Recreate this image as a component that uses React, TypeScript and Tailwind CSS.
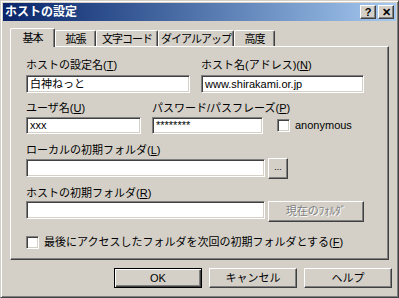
const font = "font-['Liberation_Sans','Noto_Sans_CJK_JP',sans-serif]";

const sunken =
  "bg-white border border-t-[#808080] border-l-[#808080] border-r-white border-b-white shadow-[inset_1px_1px_0_#404040,inset_-1px_-1px_0_#d4d0c8]";
const raised =
  "bg-[#d4d0c8] border border-t-white border-l-white border-r-[#404040] border-b-[#404040] shadow-[inset_-1px_-1px_0_#808080]";

const Label = ({ text, mn }: { text: string; mn: string }) => (
  <div className="h-[14px] leading-[14px] text-[11px] text-black whitespace-nowrap">
    {text}(<span className="underline underline-offset-1">{mn}</span>)
  </div>
);

const Input = ({ value, h = 18 }: { value?: string; h?: number }) => (
  <div
    className={`${sunken} w-full ${h === 18 ? "h-[18px]" : "h-[17px]"} flex items-center pl-[3px] text-[11px] leading-none text-black whitespace-nowrap overflow-hidden`}
  >
    {value}
  </div>
);

const CheckBox = () => (
  <div className={`${sunken} w-[13px] h-[13px] shrink-0`} />
);

const Tab = ({ label, active, w }: { label: string; active?: boolean; w: string }) => (
  <div
    className={`${w} ${
      active ? "h-[19px] -mb-px z-10 bg-[#d4d0c8] pt-[2px]" : "h-[16px] pt-[1px]"
    } relative shrink-0 flex justify-center border-t border-l border-r border-t-white border-l-white border-r-[#404040] shadow-[inset_-1px_0_0_#808080] rounded-t-[2px] text-[11px] leading-[14px] tracking-[-1px] text-black whitespace-nowrap`}
  >
    {label}
  </div>
);

const DlgButton = ({ label, def }: { label: string; def?: boolean }) => (
  <div
    className={`w-[88px] h-[20px] flex items-center justify-center text-[11px] text-black ${
      def
        ? "border border-black shadow-[inset_1px_1px_0_#fff,inset_-1px_-1px_0_#404040,inset_-2px_-2px_0_#808080]"
        : raised
    }`}
  >
    {label}
  </div>
);

export default function App() {
  return (
    <div
      className={`${font} w-[399px] h-[298px] bg-[#d4d0c8] border border-t-[#d4d0c8] border-l-[#d4d0c8] border-r-[#404040] border-b-[#404040] shadow-[inset_1px_1px_0_#fff,inset_-1px_-1px_0_#808080] p-[2px] flex flex-col overflow-hidden`}
    >
      {/* title bar */}
      <div className="h-[18px] bg-gradient-to-r from-[#0a246a] to-[#a6caf0] flex items-center pl-[2px] pr-[2px]">
        <span className="text-white font-bold text-[12px] leading-none">ホストの設定</span>
        <div className="ml-auto flex gap-[2px]">
          <div className={`${raised} w-[16px] h-[14px] flex items-center justify-center text-[11px] font-bold leading-none`}>
            ?
          </div>
          <div className={`${raised} w-[16px] h-[14px] flex items-center justify-center text-[11px] font-bold leading-none`}>
            ✕
          </div>
        </div>
      </div>

      {/* tabs */}
      <div className="mt-[6px] pl-[7px] flex items-end h-[19px]">
        <Tab label="基本" active w="w-[45px]" />
        <Tab label="拡張" w="w-[41px]" />
        <Tab label="文字コード" w="w-[62px]" />
        <Tab label="ダイアルアップ" w="w-[76px]" />
        <Tab label="高度" w="w-[41px]" />
      </div>

      {/* panel */}
      <div className="ml-[7px] w-[379px] h-[214px] border border-t-white border-l-white border-r-[#404040] border-b-[#404040] shadow-[inset_-1px_-1px_0_#808080] pl-[15px] pt-[11px] flex flex-col">
        <div className="flex gap-[11px]">
          <div className="w-[164px] flex flex-col gap-[3px]">
            <Label text="ホストの設定名" mn="T" />
            <Input value="白神ねっと" />
          </div>
          <div className="w-[163px] flex flex-col gap-[3px]">
            <Label text="ホスト名(アドレス)" mn="N" />
            <Input value="www.shirakami.or.jp" />
          </div>
        </div>

        <div className="mt-[8px] flex items-end gap-[11px]">
          <div className="w-[115px] flex flex-col gap-[2px]">
            <Label text="ユーザ名" mn="U" />
            <Input value="xxx" h={17} />
          </div>
          <div className="w-[111px] flex flex-col gap-[2px]">
            <Label text="パスワード/パスフレーズ" mn="P" />
            <Input value="********" h={17} />
          </div>
          <div className="ml-[3px] flex items-center gap-[5px] h-[17px] text-[11px] text-black">
            <CheckBox />
            <span>anonymous</span>
          </div>
        </div>

        <div className="mt-[9px] flex flex-col gap-[1px]">
          <Label text="ローカルの初期フォルダ" mn="L" />
          <div className="flex items-start gap-[3px]">
            <div className="w-[239px] mt-[1px]">
              <Input />
            </div>
            <div className={`${raised} w-[20px] h-[21px] flex items-center justify-center text-[9px] leading-none pb-[2px]`}>
              ...
            </div>
          </div>
        </div>

        <div className="mt-[7px] flex flex-col gap-[1px]">
          <Label text="ホストの初期フォルダ" mn="R" />
          <div className="flex items-start gap-[3px]">
            <div className="w-[239px]">
              <Input />
            </div>
            <div
              className={`${raised} w-[96px] h-[21px] flex items-center justify-center text-[11px] text-[#808080] [text-shadow:1px_1px_0_#fff]`}
            >
              現在のﾌｫﾙﾀﾞ
            </div>
          </div>
        </div>

        <div className="mt-[12px] flex items-center gap-[5px] text-[11px] text-black">
          <CheckBox />
          <span>
            最後にアクセスしたフォルダを次回の初期フォルダとする(
            <span className="underline underline-offset-1">F</span>)
          </span>
        </div>
      </div>

      {/* buttons */}
      <div className="mt-[8px] flex justify-end gap-[7px] pr-[4px]">
        <DlgButton label="OK" def />
        <DlgButton label="キャンセル" />
        <DlgButton label="ヘルプ" />
      </div>
    </div>
  );
}
